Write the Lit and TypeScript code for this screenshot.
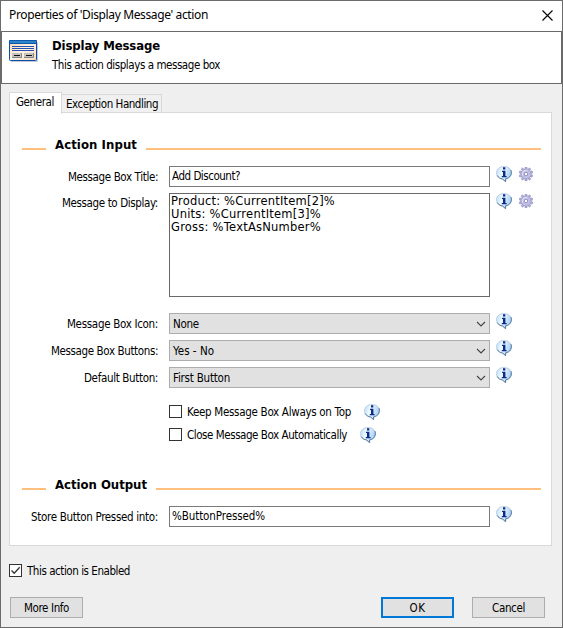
import { LitElement, html, css, svg, nothing } from "lit";
import { customElement, property, state } from "lit/decorators.js";

@customElement("fit-text")
class FitText extends LitElement {
  @property({ type: String }) text = "";
  @property({ type: Number }) width = 0;
  @state() private spacing = 0;
  static styles = css`
    :host { display: inline-block; white-space: pre; }
  `;
  firstUpdated() {
    const span = this.renderRoot.querySelector("span")!;
    const natural = span.getBoundingClientRect().width;
    this.spacing = (this.width - natural) / this.text.length;
  }
  render() {
    return html`<span style="letter-spacing:${this.spacing}px">${this.text}</span>`;
  }
}

@customElement("info-icon")
class InfoIcon extends LitElement {
  static styles = css`
    :host { display: block; width: 16px; height: 16px; }
    svg { display: block; }
  `;
  render() {
    return html`<svg width="16" height="16" viewBox="0 0 16 16">
      <defs>
        <linearGradient id="g" x1="0" y1="0" x2="1" y2="0.3">
          <stop offset="0" stop-color="#b4dcfa" />
          <stop offset="0.45" stop-color="#f2faff" />
          <stop offset="1" stop-color="#a9d0f2" />
        </linearGradient>
      </defs>
      <path d="M8 .5C3.600.5.500 3.100.500 6.800c0 3.300 2.600 5.700 5.900 6.200L9.600 15.700V13c3.500-.5 5.900-2.900 5.900-6.200C15.500 3.100 12.400.5 8 .5z"
        fill="url(#g)" stroke="#b3c6da" stroke-width=".8" />
      <path d="M15 4.200c1.300 4-1 7.900-5.400 8.700v2.800L6.600 13C4.300 12.600 2.200 11.500 1.200 9.500" fill="none" stroke="#4a7199" stroke-width=".9" />
      <path d="M7 1.200h2.300v2.200H7zM6 4.800h3.400v5.300h1.200v1.200H5.800v-1.200H7V6H6z" fill="#0a2a8c" />
    </svg>`;
  }
}

@customElement("gear-icon")
class GearIcon extends LitElement {
  static styles = css`
    :host { display: block; width: 14px; height: 14px; }
    svg { display: block; }
  `;
  render() {
    const teeth = Array.from({ length: 10 }, (_, i) => i * 36);
    return html`<svg width="14" height="14" viewBox="0 0 14 14">
      ${teeth.map(
        (a) => svg`<rect x="6" y=".1" width="2" height="3" rx=".5" fill="#b9b7df"
          stroke="#8582b5" stroke-width=".6" transform="rotate(${a} 7 7)" />`
      )}
      <circle cx="7" cy="7" r="5" fill="#c0bfe4" stroke="#8f8cc0" stroke-width=".5" />
      <path d="M3.500 8.500a4 4 0 0 1 5-5" fill="none" stroke="#dad9f2" stroke-width="1.200" />
      <rect x="5.500" y="5.500" width="3" height="3" rx=".8" fill="#fff" stroke="#8582b5" stroke-width=".9" />
    </svg>`;
  }
}

interface Line { text: string; width: number; }

@customElement("app-root")
class AppRoot extends LitElement {
  static styles = css`
    * { box-sizing: border-box; }
    :host {
      display: flex; flex-direction: column; width: 563px; height: 628px;
      border: 1px solid #6b6b6b; background: #efefef; box-sizing: border-box;
      overflow: hidden; color: #000;
      font: 11.5px/13px "DejaVu Sans Condensed", "DejaVu Sans", sans-serif;
      font-stretch: condensed;
    }
    .titlebar { display: flex; justify-content: space-between; height: 30px; background: #fff; padding: 5px 9px 0 8px; }
    .caption { font: 12px/18px "Noto Sans", "Open Sans", sans-serif; }
    .close { display: block; margin-top: 4px; width: 11px; height: 11px; }
    .header { display: flex; height: 53px; background: #fff; border: 1px solid #696969; padding: 8px 0 0 7px; }
    .header-text { display: flex; flex-direction: column; margin: -2px 0 0 13px; }
    .bold { font-weight: bold; font-size: 13px; line-height: 15px; font-stretch: condensed; }
    .desc { margin-top: 6px; }
    .window-icon { display: block; }
    .tabs { display: flex; align-items: flex-end; height: 29px; padding: 8px 0 0 8px; flex: none; }
    .tab { border: 1px solid #d9d9d9; border-bottom: 0; }
    .active { width: 53px; height: 22px; background: #fff; margin-bottom: -1px; padding: 3px 0 0 6px; z-index: 1; }
    .idle { width: 100px; height: 19px; background: #f0f0f0; border-left: 0; padding: 3px 0 0 4px; }
    .panel { flex: none; margin: -1px 10px 0 8px; height: 434px; border: 1px solid #d9d9d9; background: #fff; padding: 25px 10px 0 12px; }
    .section { display: flex; height: 16px; }
    .section .bold { margin-top: -1px; }
    .rule { height: 2px; background: #ffbf7f; margin-top: 10px; }
    .short { width: 24px; margin-right: 9px; }
    .long { flex: 1; margin-left: 9px; }
    .row { display: flex; height: 21px; margin-bottom: 6px; }
    .first { margin-top: 12px; }
    .tall { height: 104px; margin-bottom: 16px; }
    .label { width: 136px; text-align: right; line-height: 21px; padding-top: 1px; margin-right: 11px; }
    .tall .label { padding-top: 0; }
    .field { width: 321px; border: 1px solid #7a7a7a; background: #fff; line-height: 19px; padding-left: 2px; }
    .area { display: flex; flex-direction: column; padding: 1px 0 0 1px; font-family: "DejaVu Sans", sans-serif; font-size: 11.5px; font-stretch: normal; line-height: 13px; border-color: #696969; }
    .select { display: flex; justify-content: space-between; border-color: #adadad; background: #e1e1e1; line-height: 21px; padding: 0 3px 0 3px; }
    .chevron { display: block; margin-top: 7px; }
    .help { margin-left: 6px; }
    .gear { margin: 1px 0 0 7px; }
    .check-row { display: flex; align-items: flex-start; height: 23px; padding-left: 147px; }
    .checks { padding-top: 10px; }
    .box { width: 13px; height: 13px; border: 1px solid #333; background: #fff; margin-top: 1px; flex: none; }
    .box svg { display: block; }
    .check-label { margin: 2px 0 0 5px; }
    .check-help { margin-left: 13px; }
    .output { margin-top: 28px; }
    .enabled { display: flex; padding: 17px 0 0 8px; height: 51px; flex: none; }
    .buttons { display: flex; padding: 0 17px 0 9px; }
    .button { width: 73px; height: 21px; border: 1px solid #adadad; background: #e1e1e1; text-align: center; line-height: 20px; }
    .ok { border: 2px solid #0078d7; margin-left: auto; margin-right: 18px; line-height: 18px; }
  `;

  private t(text: string, width: number, cls = "") {
    return html`<fit-text class=${cls} .text=${text} .width=${width}></fit-text>`;
  }

  private section(title: string, width: number, cls = "") {
    return html`<div class="section ${cls}">
      <div class="rule short"></div>${this.t(title, width, "bold")}<div class="rule long"></div>
    </div>`;
  }

  private input(label: Line, value: Line, gear: boolean, cls = "") {
    return html`<div class="row ${cls}">
      <div class="label">${this.t(label.text, label.width)}</div>
      <div class="field">${this.t(value.text, value.width)}</div>
      <info-icon class="help"></info-icon>
      ${gear ? html`<gear-icon class="gear"></gear-icon>` : nothing}
    </div>`;
  }

  private select(label: Line, value: Line) {
    return html`<div class="row">
      <div class="label">${this.t(label.text, label.width)}</div>
      <div class="field select">
        ${this.t(value.text, value.width)}
        <svg class="chevron" width="10" height="7" viewBox="0 0 10 7">
          <path d="M1 1l4 4 4-4" fill="none" stroke="#444" stroke-width="1.100" />
        </svg>
      </div>
      <info-icon class="help"></info-icon>
    </div>`;
  }

  private check(label: string, width: number) {
    return html`<div class="check-row">
      <div class="box"></div>${this.t(label, width, "check-label")}
      <info-icon class="check-help"></info-icon>
    </div>`;
  }

  render() {
    return html`
      <div class="titlebar">
        ${this.t("Properties of 'Display Message' action", 199, "caption")}
        <svg class="close" viewBox="0 0 11 11">
          <path d="M.5.5l10 10M10.500.5l-10 10" stroke="#000" stroke-width="1.100" />
        </svg>
      </div>
      <div class="header">
        <svg class="window-icon" width="30" height="24" viewBox="0 0 30 24">
          <defs>
            <linearGradient id="paper" x1="0" y1="0" x2="1" y2="1">
              <stop offset="0" stop-color="#fbd3a8" /><stop offset=".5" stop-color="#fff3e4" /><stop offset="1" stop-color="#f8d9b8" />
            </linearGradient>
          </defs>
          <rect x="1.500" y="2" width="27.500" height="20" rx="1.500" fill="#c4c8d2" />
          <rect x=".5" y=".5" width="27" height="20" rx="1" fill="url(#paper)" stroke="#0b4fa8" />
          <rect x="0" y="0" width="28" height="4" rx="1" fill="#0d56ac" />
          <rect x="1" y="1" width="26" height="2" fill="#2a86c8" />
          <path d="M3 6.500h22M3 8.500h22M3 10.500h22" stroke="#2350b4" stroke-width="1" />
          <path d="M3 13h10v5H3zM15 13h10v5H15z" fill="#c2c2c0" />
          <path d="M3 17.500h9.500V13M15 17.500h9.500V13" fill="none" stroke="#858585" stroke-width="1" />
          <path d="M5 15.500h6M17 15.500h6" stroke="#111" stroke-width="1" />
        </svg>
        <div class="header-text">
          ${this.t("Display Message", 108, "bold")}
          ${this.t("This action displays a message box", 168, "desc")}
        </div>
      </div>
      <div class="tabs">
        <div class="tab active">${this.t("General", 38)}</div>
        <div class="tab idle">${this.t("Exception Handling", 92)}</div>
      </div>
      <div class="panel">
        ${this.section("Action Input", 82)}
        ${this.input({ text: "Message Box Title:", width: 90 }, { text: "Add Discount?", width: 68 }, true, "first")}
        <div class="row tall">
          <div class="label">${this.t("Message to Display:", 96)}</div>
          <div class="field area">
            ${this.t("Product: %CurrentItem[2]%", 164)}
            ${this.t("Units: %CurrentItem[3]%", 150)}
            ${this.t("Gross: %TextAsNumber%", 150)}
          </div>
          <info-icon class="help"></info-icon>
          <gear-icon class="gear"></gear-icon>
        </div>
        ${this.select({ text: "Message Box Icon:", width: 91 }, { text: "None", width: 26 })}
        ${this.select({ text: "Message Box Buttons:", width: 107 }, { text: "Yes - No", width: 41 })}
        ${this.select({ text: "Default Button:", width: 74 }, { text: "First Button", width: 57 })}
        <div class="checks">
          ${this.check("Keep Message Box Always on Top", 164)}
          ${this.check("Close Message Box Automatically", 160)}
        </div>
        ${this.section("Action Output", 92, "output")}
        ${this.input({ text: "Store Button Pressed into:", width: 127 }, { text: "%ButtonPressed%", width: 93 }, false, "first")}
      </div>
      <div class="enabled">
        <div class="box">
          <svg width="11" height="11" viewBox="0 0 11 11">
            <path d="M1.500 5.500l2.700 2.800 5.500-6" fill="none" stroke="#333" stroke-width="1.300" />
          </svg>
        </div>
        ${this.t("This action is Enabled", 103, "check-label")}
      </div>
      <div class="buttons">
        <div class="button">${this.t("More Info", 45)}</div>
        <div class="button ok">${this.t("OK", 16)}</div>
        <div class="button">${this.t("Cancel", 33)}</div>
      </div>
    `;
  }
}
